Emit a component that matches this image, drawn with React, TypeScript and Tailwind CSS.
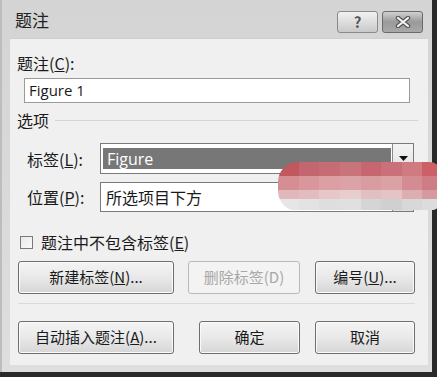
import React from "react";

const font = { fontFamily: '"Noto Sans CJK SC", "Noto Sans", sans-serif' } as const;

function Btn({ children, className = "", disabled = false }: { children: React.ReactNode; className?: string; disabled?: boolean }) {
  return (
    <div
      className={
        "h-[33px] flex items-center justify-center rounded-[3px] border text-[15px] " +
        (disabled
          ? "border-[#b9b9b9] bg-[#f3f3f3] text-[#a8a8a8] "
          : "border-[#6e6e6e] bg-gradient-to-b from-[#f4f4f4] via-[#e9e9e9] to-[#d6d6d6] text-[#1a1a1a] shadow-[inset_0_0_0_1px_#fafafa] ") +
        className
      }
    >
      {children}
    </div>
  );
}

const blob = [
  ["#c0585e", "#c46670", "#c76c74", "#c9737a", "#c66770", "#c9707a", "#cf7b80", "#cc6068"],
  ["#d48e94", "#d9979c", "#db9fa4", "#dba3a8", "#d99ca0", "#dba2a6", "#d48c92", "#cf7d84"],
  ["#e0b7ba", "#e3bcbf", "#e7c8ca", "#e8cdcf", "#e2bfc2", "#e5c3c6", "#dcaeb2", "#d59aa0"],
  ["#e6e6e6", "#e3e3e3", "#dedede", "#e0e0e0", "#d5d5d5", "#d0d0d0", "#d8d8d8", "#dcdcdc"],
];

export default function App() {
  return (
    <div className="relative w-[437px] h-[377px] overflow-hidden bg-[#2a2a2a]" style={font}>
      <div className="w-[432px] h-[372px] bg-gradient-to-b from-[#d4d4d4] to-[#dedede] border-l-[2px] border-[#bdbdbd] flex flex-col">
        {/* title bar */}
        <div className="h-[38px] flex items-center pl-[13px] pr-[9px]">
          <div className="text-[17px] text-[#222] flex-1 leading-none">题注</div>
          <div className="flex gap-[4px] mt-[6px]">
            <div className="w-[41px] h-[22px] rounded-[3px] border border-[#8a8a8a] bg-gradient-to-b from-[#f2f2f2] to-[#c9c9c9] flex items-center justify-center text-[15px] font-bold text-[#555]">?</div>
            <div className="w-[41px] h-[22px] rounded-[3px] border border-[#6a6a6a] bg-gradient-to-b from-[#d0d0d0] via-[#9a9a9a] to-[#a9a9a9] flex items-center justify-center">
              <svg width="16" height="12" viewBox="0 0 16 12">
                <path d="M3 2 L13 10 M13 2 L3 10" stroke="#555" strokeWidth="4.5" strokeLinecap="round" />
                <path d="M3 2 L13 10 M13 2 L3 10" stroke="#f4f4f4" strokeWidth="2.2" strokeLinecap="round" />
              </svg>
            </div>
          </div>
        </div>
        {/* panel */}
        <div className="ml-[8px] w-[418px] h-[327px] bg-[#f0f0f0] border-t border-[#d0d0d0] flex flex-col text-[#1a1a1a]">
          <div className="mt-[14px] ml-[7px] h-[20px] leading-[20px] text-[16px]">
            题注(<span className="underline">C</span>):
          </div>
          <div className="mt-[5px] ml-[14px] w-[386px] h-[25px] bg-white border border-[#9a9a9a] flex items-center pl-[4px] text-[15px]" style={{ fontFamily: '"Open Sans", "Noto Sans", sans-serif' }}>
            Figure 1
          </div>
          <div className="mt-[7px] ml-[7px] h-[20px] flex items-center gap-[6px] text-[16px]">
            <span className="leading-[20px]">选项</span>
            <div className="flex-1 mr-[10px] h-px bg-[#d4d4d4]" />
          </div>
          <div className="mt-[13px] ml-[17px] h-[31px] flex items-center">
            <div className="w-[73px] text-[16px]">
              标签(<span className="underline">L</span>):
            </div>
            <div className="w-[314px] h-[31px] border border-[#7a7a7a] bg-white flex items-center">
              <div className="ml-[2px] w-[288px] h-[21px] bg-[#777] text-white text-[16px] flex items-center pl-[4px]" style={{ fontFamily: '"Open Sans", "Noto Sans", sans-serif' }}>
                Figure
              </div>
              <div className="ml-auto w-[21px] h-[29px] border-l border-[#8a8a8a] bg-gradient-to-b from-[#f4f4f4] to-[#e0e0e0] flex items-center justify-center">
                <svg width="9" height="5" viewBox="0 0 9 5"><path d="M0 0 H9 L4.5 5Z" fill="#111" /></svg>
              </div>
            </div>
          </div>
          <div className="mt-[8px] ml-[17px] h-[30px] flex items-center">
            <div className="w-[73px] text-[16px]">
              位置(<span className="underline">P</span>):
            </div>
            <div className="w-[314px] h-[30px] border border-[#7a7a7a] bg-white flex items-center">
              <div className="pl-[5px] text-[16px]">所选项目下方</div>
              <div className="ml-auto w-[21px] h-[28px] border-l border-[#8a8a8a] bg-gradient-to-b from-[#f4f4f4] to-[#e0e0e0]" />
            </div>
          </div>
          <div className="mt-[20px] ml-[10px] h-[20px] flex items-center gap-[8px] text-[16px]">
            <div className="w-[13px] h-[13px] border border-[#7a7a7a] bg-gradient-to-br from-[#e8e8e8] to-[#fafafa]" />
            <span>
              题注中不包含标签(<span className="underline">E</span>)
            </span>
          </div>
          <div className="mt-[9px] ml-[8px] flex">
            <Btn className="w-[156px]">
              新建标签(<span className="underline">N</span>)...
            </Btn>
            <Btn className="ml-[14px] w-[112px]" disabled>
              删除标签(D)
            </Btn>
            <Btn className="ml-[15px] w-[100px]">
              编号(<span className="underline">U</span>)...
            </Btn>
          </div>
          <div className="mt-[9px] ml-[8px] w-[397px] h-px bg-[#dadada]" />
          <div className="mt-[17px] ml-[8px] flex">
            <Btn className="w-[156px]">
              自动插入题注(<span className="underline">A</span>)...
            </Btn>
            <Btn className="ml-[25px] w-[101px]">确定</Btn>
            <Btn className="ml-[15px] w-[100px]">取消</Btn>
          </div>
        </div>
      </div>
      {/* redaction overlay */}
      <div className="absolute left-[278px] top-[162px] w-[165px] h-[49px] rounded-l-[20px] rounded-r-[14px] overflow-hidden flex flex-col">
        {blob.map((row, i) => (
          <div key={i} className={"flex " + (i === 3 ? "h-[11px]" : i === 2 ? "h-[9px]" : "h-[14px]")}>
            {row.map((c, j) => (
              <div key={j} className="flex-1" style={{ backgroundColor: c }} />
            ))}
          </div>
        ))}
      </div>
    </div>
  );
}
